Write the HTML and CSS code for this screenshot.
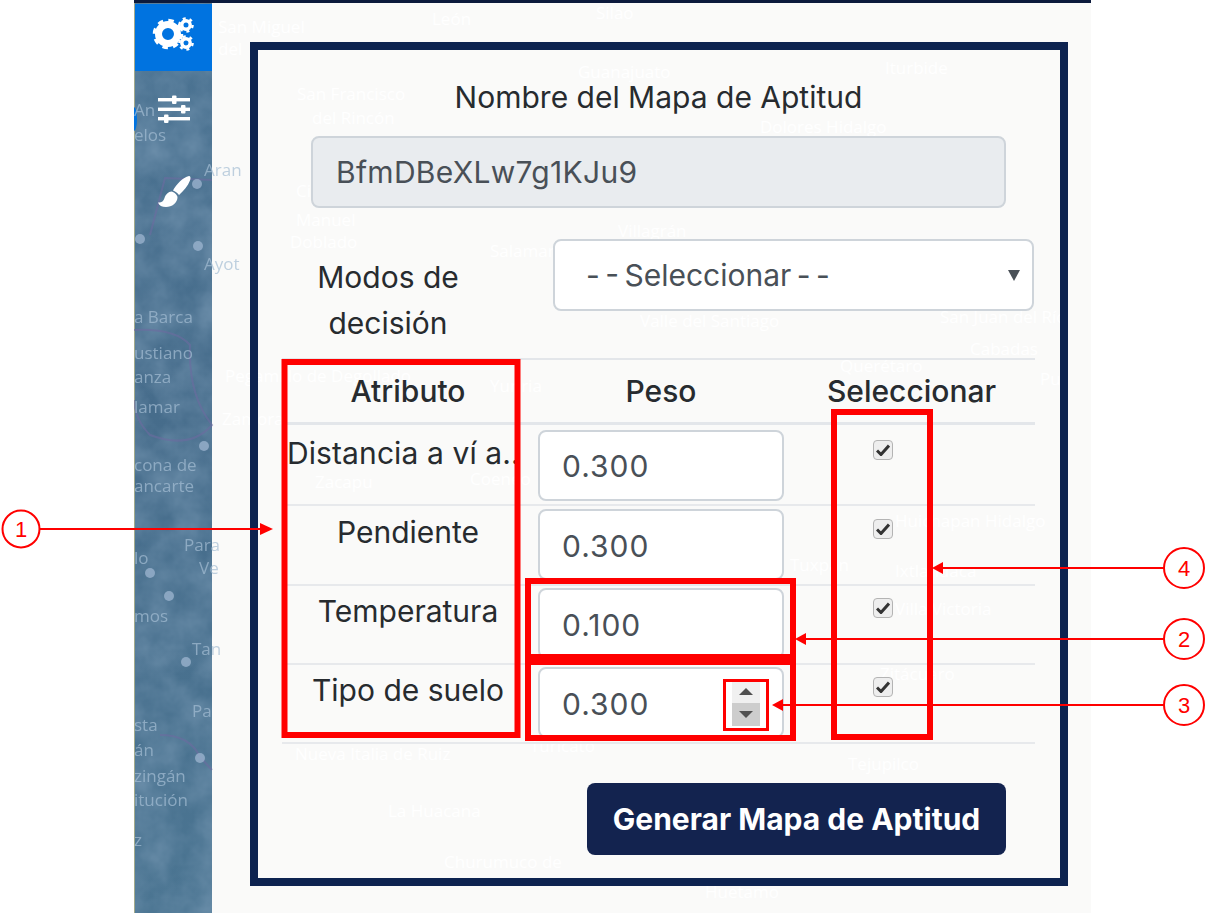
FILE: index.html
```html
<!DOCTYPE html>
<html lang="es">
<head>
    <meta charset="UTF-8">
    <title>Mapa de Aptitud</title>
    <link rel="stylesheet" href="styles.css">
</head>

<body>

<div class="app">

    <!-- Map behind the sidebar and the panel, in page coordinates -->
    <svg class="map" viewBox="134 0 957 913" width="957" height="913">
        <defs>
            <linearGradient id="water" x1="0" y1="0" x2="0" y2="1">
                <stop offset="0" stop-color="#4c7493"/>
                <stop offset="0.45" stop-color="#466c8b"/>
                <stop offset="1" stop-color="#4b7592"/>
            </linearGradient>
            <filter id="mottle" x="0" y="0" width="100%" height="100%">
                <feTurbulence type="fractalNoise" baseFrequency="0.03" numOctaves="4" seed="7"/>
                <feColorMatrix values="0 0 0 0 0.2  0 0 0 0 0.33  0 0 0 0 0.47  0 0 0 0.9 -0.2"/>
            </filter>
        </defs>
        <rect x="134" y="0" width="78" height="913" fill="url(#water)"/>
        <rect x="134" y="0" width="78" height="913" filter="url(#mottle)"/>
        <rect x="134" y="0" width="1" height="913" fill="#a3aa8c"/>
        <ellipse cx="134" cy="119" rx="3" ry="12" fill="#0073e0"/>
        <path class="border-line" d="M134 330 Q175 328 190 345 Q188 395 212 425 Q190 450 150 435 Q135 420 134 400"/>
        <path class="border-line" d="M212 180 L165 178 L150 235"/>
        <path class="border-line" d="M160 735 Q190 735 200 757 L212 770"/>
        <g class="side-dots">
            <circle cx="197" cy="184" r="5"/><circle cx="140" cy="239" r="5"/><circle cx="198" cy="246" r="5"/>
            <circle cx="204" cy="446" r="5"/><circle cx="150" cy="573" r="5"/><circle cx="169" cy="596" r="5"/>
            <circle cx="186" cy="662" r="5"/><circle cx="200" cy="758" r="5"/>
        </g>
        <g class="side-labels">
            <text x="204" y="176">Aran</text><text x="204" y="270">Ayot</text>
            <text x="134" y="116">An</text><text x="134" y="141">elos</text>
            <text x="134" y="323">a Barca</text><text x="134" y="359">ustiano</text>
            <text x="134" y="383">anza</text><text x="134" y="413">lamar</text>
            <text x="134" y="471">cona de</text><text x="134" y="492">ancarte</text>
            <text x="184" y="551">Para</text><text x="199" y="574">Ve</text>
            <text x="134" y="564">lo</text><text x="134" y="622">mos</text>
            <text x="192" y="655">Tan</text><text x="192" y="717">Pa</text>
            <text x="134" y="731">sta</text><text x="134" y="756">án</text>
            <text x="134" y="782">zingán</text><text x="134" y="806">itución</text>
            <text x="134" y="846">z</text>
        </g>
        <g class="panel-labels">
            <text x="218" y="33">San Miguel</text><text x="218" y="55">del</text>
            <text x="432" y="25">León</text><text x="596" y="19">Silao</text>
            <text x="578" y="78">Guanajuato</text><text x="297" y="100">San Francisco</text>
            <text x="312" y="124">del Rincón</text><text x="760" y="133">Dolores Hidalgo</text>
            <text x="885" y="74">Iturbide</text><text x="296" y="197">Ciudad</text>
            <text x="296" y="226">Manuel</text><text x="290" y="248">Doblado</text>
            <text x="490" y="257">Salamanca</text><text x="618" y="237">Villagrán</text>
            <text x="640" y="327">Valle del Santiago</text><text x="940" y="323">San Juan del Río</text>
            <text x="970" y="355">Cabadas</text><text x="225" y="382">Pegamillo de Degollado</text>
            <text x="840" y="372">Querétaro</text><text x="490" y="392">Yuriria</text>
            <text x="1040" y="385">Pu</text><text x="222" y="425">Zamora</text>
            <text x="315" y="488">Zacapu</text><text x="470" y="485">Coeneo</text>
            <text x="895" y="527">Huichapan Hidalgo</text><text x="680" y="525">Morelia</text>
            <text x="790" y="571">Tuxpan</text><text x="895" y="577">Ixtlahuaca</text>
            <text x="895" y="615">Villa Victoria</text><text x="880" y="680">Zitácuaro</text>
            <text x="295" y="760">Nueva Italia de Ruiz</text><text x="530" y="752">Turicato</text>
            <text x="388" y="817">La Huacana</text><text x="444" y="868">Churumuco de</text>
            <text x="705" y="898">Huetamo</text><text x="848" y="770">Tejupilco</text>
        </g>
    </svg>

    <div class="topbar"></div>

    <div class="shell">
        <nav class="sidebar">
            <a class="side-btn side-btn-active">
                <svg width="44" height="40" viewBox="0 0 44 40">
                    <g fill="none" stroke="#fff">
                        <circle cx="16" cy="20" r="9.5" stroke-width="7"/>
                        <circle cx="16" cy="20" r="13" stroke-width="4.5" stroke-dasharray="5.2 5"/>
                        <circle cx="34" cy="11" r="4.2" stroke-width="3.4"/>
                        <circle cx="34" cy="11" r="6.6" stroke-width="2.4" stroke-dasharray="3 3.9"/>
                        <circle cx="34" cy="29" r="4.2" stroke-width="3.4"/>
                        <circle cx="34" cy="29" r="6.6" stroke-width="2.4" stroke-dasharray="3 3.9"/>
                    </g>
                </svg>
            </a>
            <a class="side-btn">
                <svg width="34" height="30" viewBox="0 0 34 30" fill="#fff">
                    <rect x="1" y="3" width="32" height="3.4"/>
                    <rect x="1" y="12.6" width="32" height="3.4"/>
                    <rect x="1" y="22" width="32" height="3.4"/>
                    <rect x="15" y="0.5" width="4.5" height="8.4" rx="1"/>
                    <rect x="24" y="10" width="4.5" height="8.4" rx="1"/>
                    <rect x="7" y="19.5" width="4.5" height="8.4" rx="1"/>
                </svg>
            </a>
            <a class="side-btn">
                <svg width="36" height="34" viewBox="0 0 36 34" fill="#fff">
                    <path d="M33 1 C34.5 1 35 3 34 5.5 C32 11 27.500 16 23 20 C21.500 18 19 16 17 15.500 C20 10 27 2 33 1 Z"/>
                    <path d="M15.500 16.500 C18 17 21 19.500 21.500 22 C21.500 28 16 32 10 32 C6 32 3 30.500 2 27.500 C5 28 7.500 26.500 8.500 23 C9.500 19.500 12.500 16.500 15.500 16.500 Z"/>
                </svg>
            </a>
        </nav>

        <main class="main">
            <form class="frame">
                <div class="map-name">
                    <label class="map-name-label">Nombre del Mapa de Aptitud</label>
                    <input class="field field-readonly" type="text" value="BfmDBeXLw7g1KJu9" readonly>
                </div>

                <div class="mode-row">
                    <label class="mode-label">Modos de decisión</label>
                    <div class="select-box">
                        <span class="select-text">- - Seleccionar - -</span>
                        <span class="select-caret"></span>
                    </div>
                </div>

                <table class="attr-table">
                    <thead>
                        <tr>
                            <th class="col-name">Atributo</th>
                            <th class="col-weight">Peso</th>
                            <th class="col-check">Seleccionar</th>
                        </tr>
                    </thead>
                    <tbody>
                        <tr>
                            <td class="attr-name attr-name-long">Distancia a ví a..</td>
                            <td><div class="field weight">0.300</div></td>
                            <td class="attr-check"><span class="check"><svg width="14" height="12" viewBox="0 0 14 12"><path d="M1 6.500 L5 10.500 L13 1.500" fill="none" stroke="#333" stroke-width="3"/></svg></span></td>
                        </tr>
                        <tr>
                            <td class="attr-name">Pendiente</td>
                            <td><div class="field weight">0.300</div></td>
                            <td class="attr-check"><span class="check"><svg width="14" height="12" viewBox="0 0 14 12"><path d="M1 6.500 L5 10.500 L13 1.500" fill="none" stroke="#333" stroke-width="3"/></svg></span></td>
                        </tr>
                        <tr>
                            <td class="attr-name">Temperatura</td>
                            <td><div class="field weight">0.100</div></td>
                            <td class="attr-check"><span class="check"><svg width="14" height="12" viewBox="0 0 14 12"><path d="M1 6.500 L5 10.500 L13 1.500" fill="none" stroke="#333" stroke-width="3"/></svg></span></td>
                        </tr>
                        <tr>
                            <td class="attr-name">Tipo de suelo</td>
                            <td>
                                <div class="field weight">0.300
                                    <span class="spinner">
                                        <span class="spin-up"></span>
                                        <span class="spin-down"></span>
                                    </span>
                                </div>
                            </td>
                            <td class="attr-check"><span class="check"><svg width="14" height="12" viewBox="0 0 14 12"><path d="M1 6.500 L5 10.500 L13 1.500" fill="none" stroke="#333" stroke-width="3"/></svg></span></td>
                        </tr>
                    </tbody>
                </table>

                <div class="actions">
                    <button class="generate" type="button">Generar Mapa de Aptitud</button>
                </div>
            </form>
        </main>
    </div>

    <!-- Red callouts drawn over the screenshot -->
    <svg class="callouts" viewBox="0 0 1206 913" width="1206" height="913">
        <g class="callout-box">
            <rect x="284.500" y="362" width="233" height="373"/>
            <rect x="528" y="581" width="265" height="76"/>
            <rect x="528" y="662" width="265" height="76"/>
            <rect x="834" y="412" width="96" height="325"/>
            <rect class="thin" x="724.500" y="680.500" width="43" height="49"/>
        </g>
        <g class="callout-line">
            <line x1="40" y1="529" x2="262" y2="529"/>
            <line x1="804" y1="639" x2="1164" y2="639"/>
            <line x1="781" y1="705" x2="1164" y2="705"/>
            <line x1="941" y1="568" x2="1164" y2="568"/>
        </g>
        <g class="callout-head">
            <path d="M273 529 L260 523 L260 535 Z"/>
            <path d="M795 639 L806 633 L806 645 Z"/>
            <path d="M772 705 L783 699 L783 711 Z"/>
            <path d="M932 568 L943 562 L943 574 Z"/>
        </g>
        <g class="callout-num">
            <circle cx="21" cy="529" r="18.500"/><text x="21" y="537">1</text>
            <circle cx="1184" cy="639" r="20"/><text x="1184" y="647">2</text>
            <circle cx="1184" cy="705" r="20"/><text x="1184" y="713">3</text>
            <circle cx="1184" cy="568" r="20"/><text x="1184" y="576">4</text>
        </g>
    </svg>

</div>

</body>
</html>
```

FILE: styles.css
```css
body {
    margin: 0;
    background-color: #fff;
    font-family: Inter, "Liberation Sans", sans-serif;
    color: #272b2f;
}
.app {
    position: relative;
    width: 1206px;
    height: 913px;
    overflow: hidden;
}
.map {
    position: absolute;
    left: 134px;
    top: 0;
    background-color: #fafaf9;
}
.border-line {
    fill: none;
    stroke: #6d6aa0;
    stroke-width: 2;
    opacity: 0.6;
}
.side-dots circle {
    fill: #9db6d0;
    opacity: 0.75;
}
.side-labels text {
    font-family: "Open Sans", sans-serif;
    font-size: 17px;
    fill: #a5bed4;
    opacity: 0.7;
}
.panel-labels text {
    font-family: "Open Sans", sans-serif;
    font-size: 17px;
    fill: #fff;
}
.topbar {
    position: relative;
    margin-left: 134px;
    width: 957px;
    height: 3px;
    background-color: #0c1a3c;
}
.shell {
    position: relative;
    display: flex;
    margin-left: 134px;
    width: 957px;
}

/* sidebar */
.sidebar {
    box-sizing: border-box;
    flex: 0 0 78px;
    padding: 1px 0 0 1px;
}
.side-btn {
    display: flex;
    align-items: center;
    justify-content: center;
    height: 67px;
    margin-bottom: 6px;
}
.side-btn-active {
    box-sizing: border-box;
    background-color: #0073e0;
    padding-bottom: 8px;
    margin-bottom: 5px;
}
.side-btn:last-child {
    height: 85px;
}

/* panel */
.main {
    padding: 39px 0 0 38px;
}
.frame {
    box-sizing: border-box;
    width: 818px;
    height: 844px;
    border: 8px solid #0d2350;
    padding: 30px 25px 0 24px;
}
.map-name {
    display: flex;
    flex-direction: column;
    align-items: center;
}
.map-name-label {
    font-size: 30px;
    line-height: 34px;
    margin-bottom: 22px;
}
.field {
    box-sizing: border-box;
    height: 72px;
    background-color: #fff;
    border: 2px solid #ced4da;
    border-radius: 8px;
    color: #495057;
    font-family: inherit;
    font-size: 30px;
    padding: 0 23px;
}
.field-readonly {
    width: 695px;
    background-color: #e9ecef;
    letter-spacing: 0.3px;
}
.mode-row {
    display: flex;
    align-items: flex-start;
    margin-top: 31px;
    height: 119px;
}
.mode-label {
    width: 212px;
    margin-top: 15px;
    font-size: 30px;
    line-height: 46px;
    text-align: center;
}
.select-box {
    box-sizing: border-box;
    display: flex;
    align-items: center;
    justify-content: space-between;
    width: 481px;
    height: 72px;
    margin-left: 59px;
    padding: 0 12px 0 31px;
    background-color: #fff;
    border: 2px solid #ced4da;
    border-radius: 8px;
    color: #495057;
    font-size: 30px;
}
.select-text {
    word-spacing: -3px;
}
.select-caret {
    width: 0;
    height: 0;
    border-left: 6px solid transparent;
    border-right: 6px solid transparent;
    border-top: 11px solid #495057;
}

/* table */
.attr-table {
    border-collapse: collapse;
    table-layout: fixed;
    width: 753px;
    font-size: 30px;
}
.attr-table th {
    box-sizing: border-box;
    height: 64px;
    font-weight: 500;
    text-align: center;
    border-top: 2px solid #e3e6ea;
    border-bottom: 3px solid #e3e6ea;
    padding: 0;
}
.col-name {
    width: 252px;
}
.col-weight {
    width: 254px;
}
.attr-table td {
    box-sizing: border-box;
    height: 82px;
    padding: 5px 0 0;
    border-bottom: 2px solid #e7e9ec;
    vertical-align: top;
}
.attr-table tbody tr:nth-child(2) td {
    height: 80px;
    padding-top: 3px;
}
.attr-table tbody tr:nth-child(n+3) td {
    height: 79px;
    padding-top: 2px;
}
.attr-name {
    text-align: center;
    white-space: nowrap;
    line-height: 46px;
}
.attr-name-long {
    letter-spacing: 0.1px;
    text-align: left;
    padding-left: 5px !important;
    overflow: hidden;
}
.weight {
    position: relative;
    display: flex;
    align-items: center;
    width: 246px;
    height: 71px;
    margin-left: 4px;
    padding: 2px 0 0 22px;
    letter-spacing: 1px;
}
.spinner {
    position: absolute;
    right: 22px;
    top: 11px;
    display: flex;
    flex-direction: column;
    width: 28px;
}
.spin-up, .spin-down {
    display: flex;
    align-items: center;
    justify-content: center;
    height: 23px;
}
.spin-up {
    background-color: #f0f0f0;
}
.spin-down {
    background-color: #cdcdcd;
}
.spin-up::after, .spin-down::after {
    content: "";
    width: 0;
    height: 0;
    border-left: 7px solid transparent;
    border-right: 7px solid transparent;
}
.spin-up::after {
    border-bottom: 7px solid #505050;
}
.spin-down::after {
    border-top: 7px solid #505050;
}
.attr-check {
    padding-left: 85px !important;
}
.check {
    box-sizing: border-box;
    display: flex;
    align-items: center;
    justify-content: center;
    width: 20px;
    height: 20px;
    margin-top: 10px;
    background-color: #eee;
    border: 1px solid #b4b4b4;
    border-radius: 4px;
}

/* button */
.actions {
    display: flex;
    justify-content: flex-end;
    margin-top: 39px;
    padding-right: 29px;
}
.generate {
    width: 419px;
    height: 72px;
    background-color: #13234f;
    border: none;
    border-radius: 8px;
    color: #fff;
    font-family: inherit;
    font-size: 30px;
    font-weight: 700;
}

/* callouts */
.callouts {
    position: absolute;
    left: 0;
    top: 0;
    pointer-events: none;
}
.callout-box rect {
    fill: none;
    stroke: #f00;
    stroke-width: 6;
}
.callout-box .thin {
    stroke-width: 3;
}
.callout-line line {
    stroke: #f00;
    stroke-width: 2;
}
.callout-head path {
    fill: #f00;
}
.callout-num circle {
    fill: #fff;
    stroke: #f00;
    stroke-width: 2;
}
.callout-num text {
    fill: #f00;
    font-family: "Liberation Sans", sans-serif;
    font-size: 22px;
    text-anchor: middle;
}
```
